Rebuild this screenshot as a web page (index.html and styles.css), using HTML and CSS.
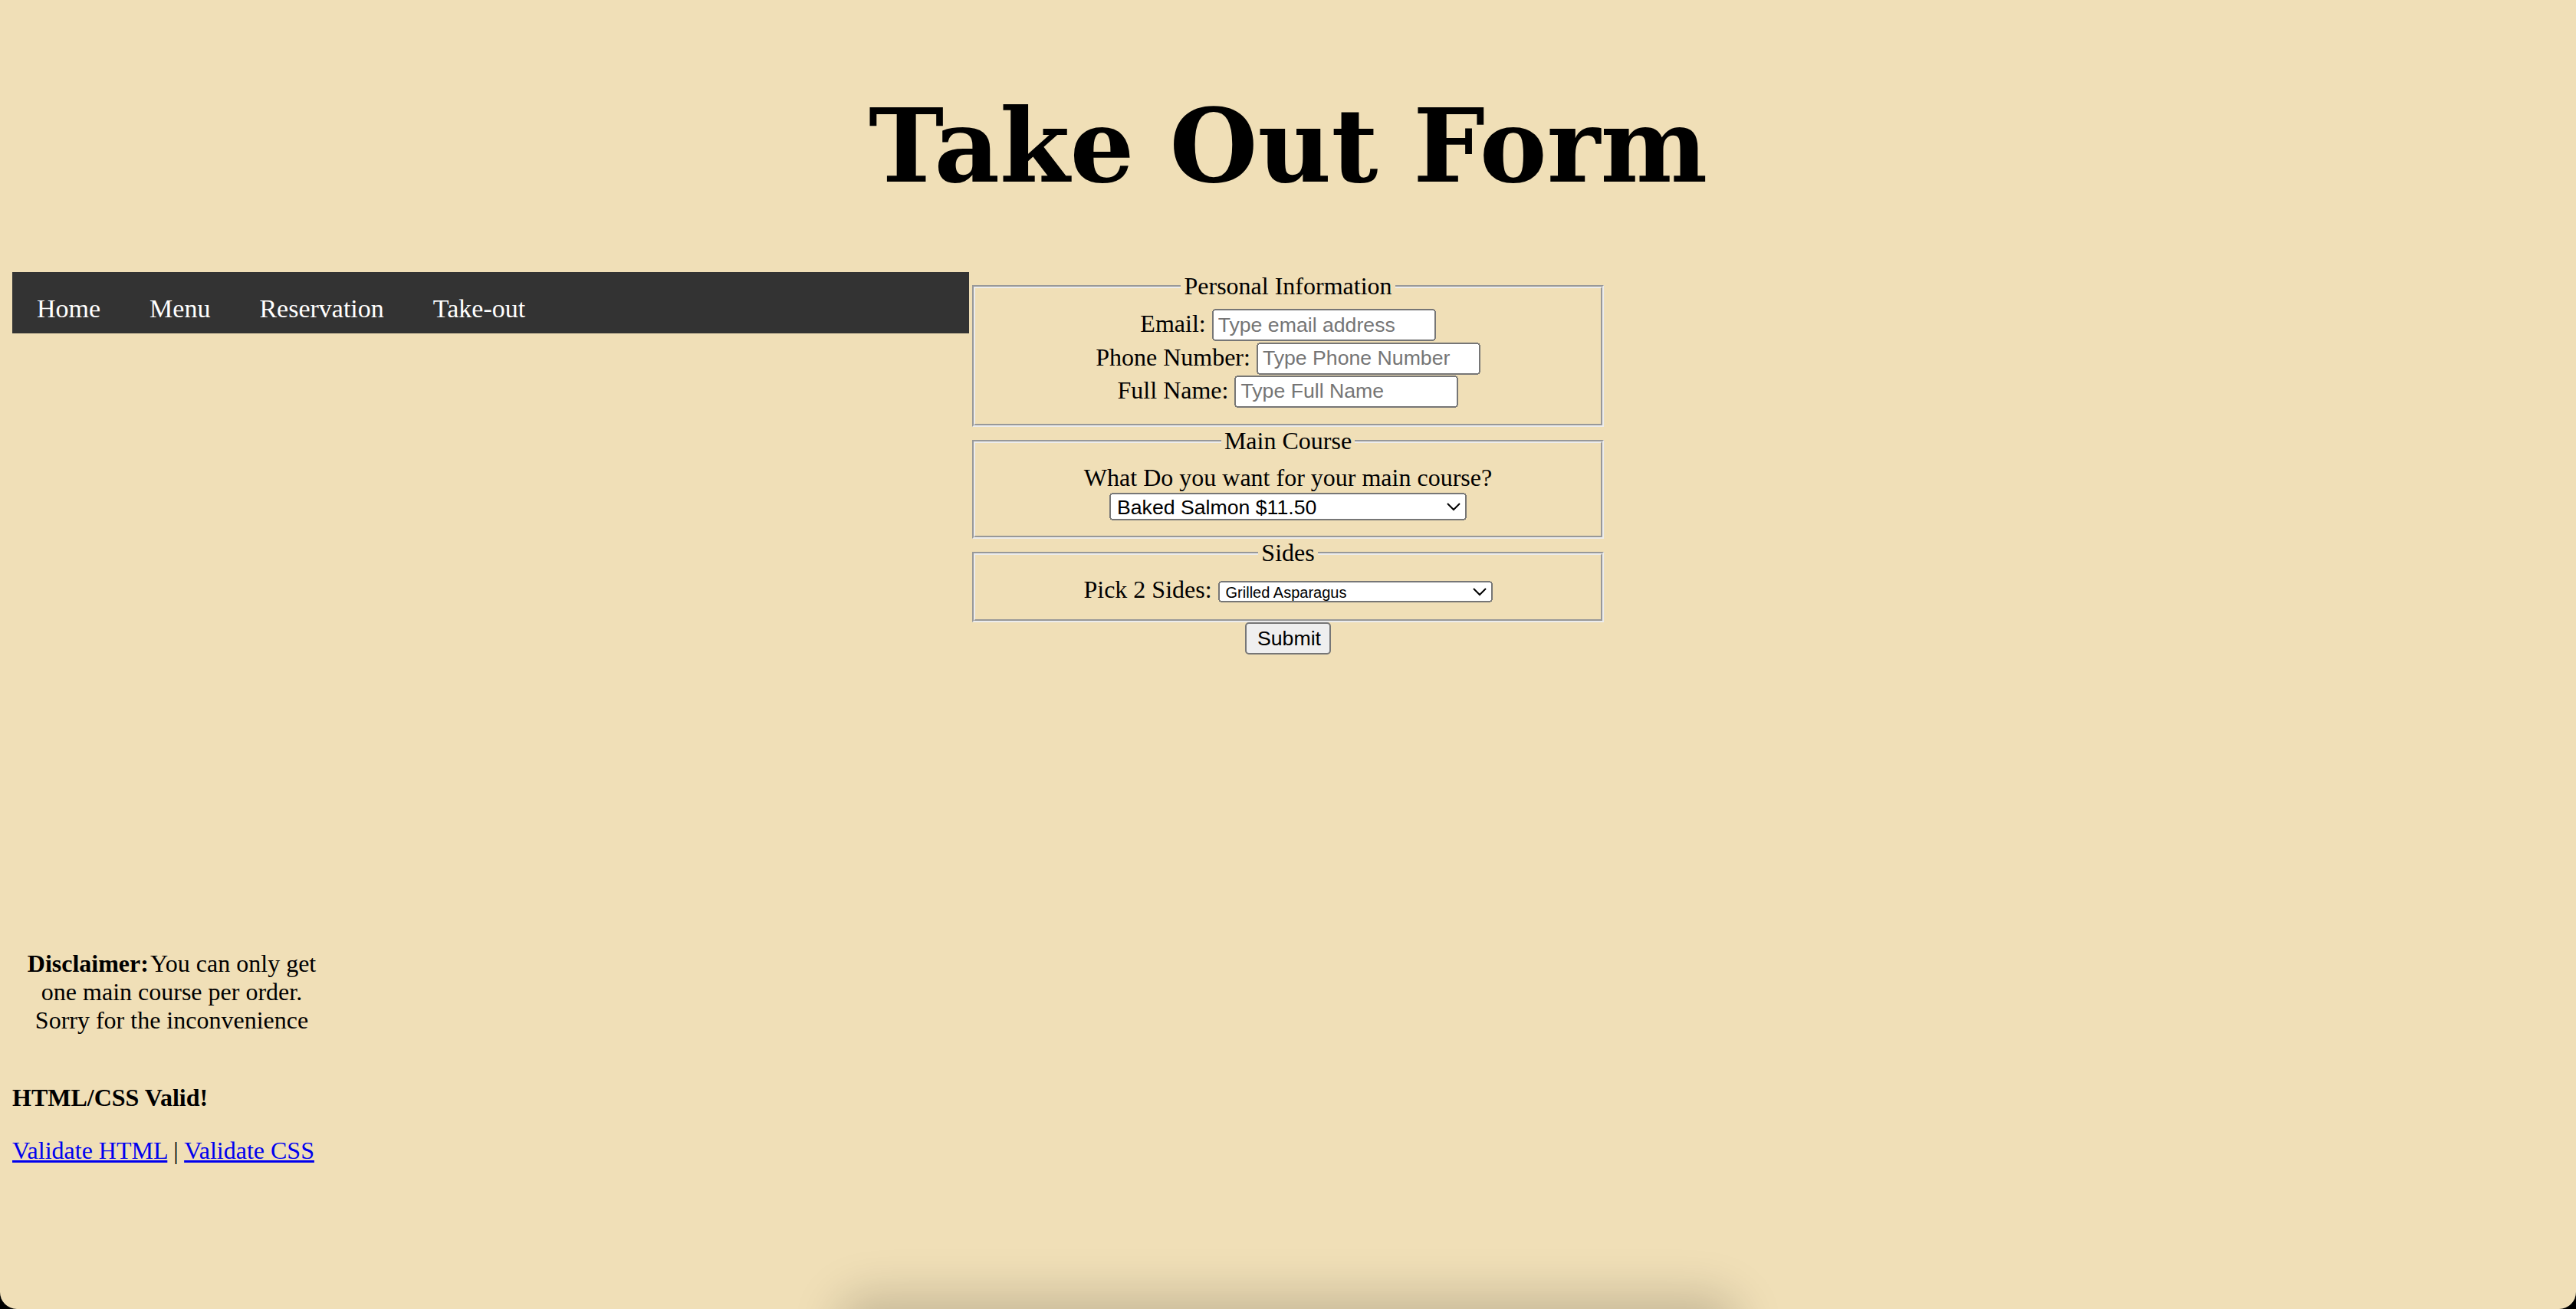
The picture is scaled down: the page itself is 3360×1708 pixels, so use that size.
FILE: index.html
```html
<!DOCTYPE html>
<html lang="en">
<head>
<meta charset="utf-8">
<title>Take Out Form</title>
<link rel="stylesheet" href="styles.css">
</head>
<body>
<div class="page">
  <h1 class="title">Take Out Form</h1>
  <div class="layout">
    <div class="side">
      <nav class="nav">
        <a href="#">Home</a>
        <a href="#">Menu</a>
        <a href="#">Reservation</a>
        <a href="#">Take-out</a>
      </nav>
      <p class="disclaimer"><strong>Disclaimer:</strong>You can only get one main course per order. Sorry for the inconvenience</p>
    </div>
    <form class="order">
      <fieldset>
        <legend>Personal Information</legend>
        <div class="row input-row"><label for="email">Email:</label> <input class="field" id="email" type="email" placeholder="Type email address"></div>
        <div class="row input-row"><label for="phone">Phone Number:</label> <input class="field" id="phone" type="tel" placeholder="Type Phone Number"></div>
        <div class="row input-row"><label for="name">Full Name:</label> <input class="field" id="name" type="text" placeholder="Type Full Name"></div>
      </fieldset>
      <fieldset>
        <legend>Main Course</legend>
        <div class="row"><label for="main">What Do you want for your main course?</label></div>
        <div class="row">
          <select class="main-select" id="main">
            <option>Baked Salmon $11.50</option>
            <option>Grilled Chicken $10.00</option>
            <option>Ribeye Steak $15.00</option>
          </select>
        </div>
      </fieldset>
      <fieldset>
        <legend>Sides</legend>
        <div class="row"><label for="sides">Pick 2 Sides:</label> <select class="side-select" id="sides">
            <option>Grilled Asparagus</option>
            <option>Mashed Potatoes</option>
            <option>Caesar Salad</option>
          </select></div>
      </fieldset>
      <button class="submit" type="submit">Submit</button>
    </form>
  </div>
  <footer class="valid">
    <p class="valid-title">HTML/CSS Valid!</p>
    <p><a href="#">Validate HTML</a> | <a href="#">Validate CSS</a></p>
  </footer>
  <div class="dock-shadow"></div>
</div>
</body>
</html>
```

FILE: styles.css
```css
html {
  zoom: 2;
  background: #000;
}

body {
  margin: 0;
  font-family: "Liberation Serif", "Times New Roman", serif;
  font-size: 16px;
  color: #000;
}

.page {
  position: relative;
  overflow: hidden;
  box-sizing: border-box;
  min-height: 854px;
  padding: 8px;
  background: #f0dfb7;
  border-radius: 0 0 11px 11px;
}

.title {
  margin: 47.3px 0 42.35px;
  font-family: "DejaVu Serif", Georgia, serif;
  font-size: 66px;
  line-height: 80px;
  font-weight: bold;
  text-align: center;
}

.layout {
  display: grid;
  grid-template-columns: 37.5% 25% 1fr;
  align-items: start;
}

.nav {
  display: flex;
  height: 40px;
  background: #333;
}

.nav a {
  padding: 14.5px 16px 0;
  font-size: 17px;
  color: #fff;
  text-decoration: none;
}

.disclaimer {
  width: 208px;
  margin: 401.9px 0 16px;
  text-align: center;
}

.disclaimer strong {
  margin-right: 1px;
}

.order {
  text-align: center;
}

.order fieldset {
  margin: 0 2px;
  padding: 0.35em 0.75em 0.625em;
  border: 2px groove rgb(236, 236, 236);
}

.order legend {
  margin: 0 auto;
  padding: 0 2px;
}

.input-row {
  height: 21.6px;
}

.field {
  box-sizing: border-box;
  width: 146px;
  height: 21px;
  font-family: "Liberation Sans", Arial, sans-serif;
  font-size: 13.333px;
}

.main-select {
  box-sizing: border-box;
  width: 233px;
  height: 18px;
  font-family: "Liberation Sans", Arial, sans-serif;
  font-size: 13.333px;
}

.side-select {
  box-sizing: border-box;
  width: 179px;
  height: 14px;
  font-family: "Liberation Sans", Arial, sans-serif;
  font-size: 10px;
}

.submit {
  box-sizing: border-box;
  width: 56px;
  height: 21px;
  font-family: "Liberation Sans", Arial, sans-serif;
  font-size: 13.333px;
}

.valid p {
  margin: 16px 0;
}

.valid-title {
  font-weight: bold;
}

.valid a {
  color: #0000ee;
}

.dock-shadow {
  position: absolute;
  left: 555px;
  width: 570px;
  bottom: -24px;
  height: 24px;
  border-radius: 12px;
  box-shadow: 0 0 30px 10px rgba(0, 0, 0, 0.17);
  pointer-events: none;
}
```
